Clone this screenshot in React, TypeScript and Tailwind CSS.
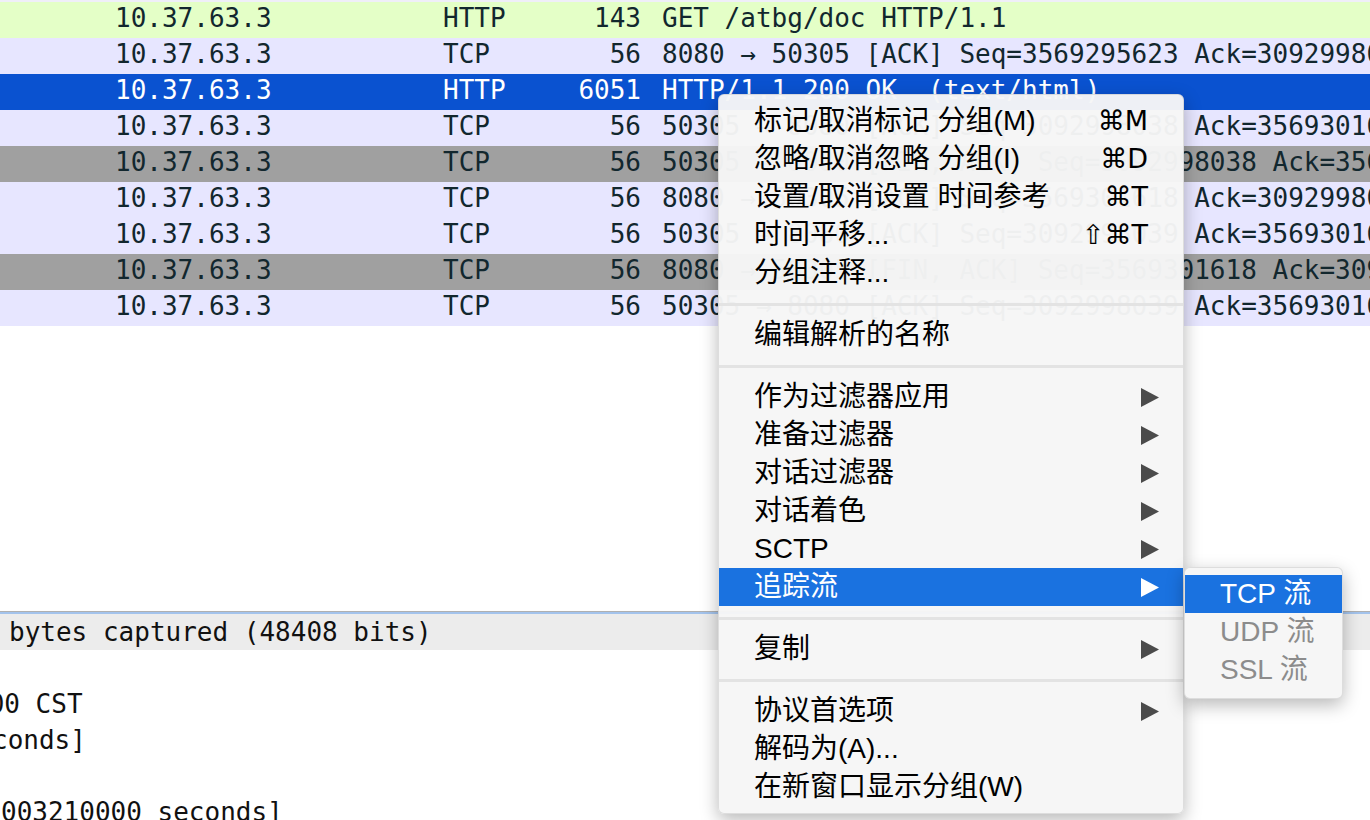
import React from 'react';

type Row = { proto: string; len: string; info: string; tone: 'green' | 'lav' | 'sel' | 'gray' };

const ROWS: Row[] = [
  { proto: 'HTTP', len: '143', info: 'GET /atbg/doc HTTP/1.1', tone: 'green' },
  { proto: 'TCP', len: '56', info: '8080 → 50305 [ACK] Seq=3569295623 Ack=3092998038 Win=4096', tone: 'lav' },
  { proto: 'HTTP', len: '6051', info: 'HTTP/1.1 200 OK  (text/html)', tone: 'sel' },
  { proto: 'TCP', len: '56', info: '50305 → 8080 [ACK] Seq=3092998038 Ack=3569301618 Win=4096', tone: 'lav' },
  { proto: 'TCP', len: '56', info: '50305 → 8080 [FIN, ACK] Seq=3092998038 Ack=3569301618', tone: 'gray' },
  { proto: 'TCP', len: '56', info: '8080 → 50305 [ACK] Seq=3569301618 Ack=3092998039 Win=4096', tone: 'lav' },
  { proto: 'TCP', len: '56', info: '50305 → 8080 [ACK] Seq=3092998039 Ack=3569301618 Win=4096', tone: 'lav' },
  { proto: 'TCP', len: '56', info: '8080 → 50305 [FIN, ACK] Seq=3569301618 Ack=3092998039', tone: 'gray' },
  { proto: 'TCP', len: '56', info: '50305 → 8080 [ACK] Seq=3092998039 Ack=3569301619 Win=4096', tone: 'lav' },
];

const TONE: Record<Row['tone'], string> = {
  green: 'bg-[#e4ffc7] text-[#12272e]',
  lav: 'bg-[#e7e6ff] text-[#12272e]',
  sel: 'bg-[#0a52d0] text-white',
  gray: 'bg-[#a0a0a0] text-[#12272e]',
};

type Item =
  | { kind: 'item'; label: string; key?: string; sub?: boolean; active?: boolean }
  | { kind: 'sep' };

const MENU: Item[] = [
  { kind: 'item', label: '标记/取消标记 分组(M)', key: '⌘M' },
  { kind: 'item', label: '忽略/取消忽略 分组(I)', key: '⌘D' },
  { kind: 'item', label: '设置/取消设置 时间参考', key: '⌘T' },
  { kind: 'item', label: '时间平移...', key: '⇧⌘T' },
  { kind: 'item', label: '分组注释...' },
  { kind: 'sep' },
  { kind: 'item', label: '编辑解析的名称' },
  { kind: 'sep' },
  { kind: 'item', label: '作为过滤器应用', sub: true },
  { kind: 'item', label: '准备过滤器', sub: true },
  { kind: 'item', label: '对话过滤器', sub: true },
  { kind: 'item', label: '对话着色', sub: true },
  { kind: 'item', label: 'SCTP', sub: true },
  { kind: 'item', label: '追踪流', sub: true, active: true },
  { kind: 'sep' },
  { kind: 'item', label: '复制', sub: true },
  { kind: 'sep' },
  { kind: 'item', label: '协议首选项', sub: true },
  { kind: 'item', label: '解码为(A)...' },
  { kind: 'item', label: '在新窗口显示分组(W)' },
];

const mono = "font-['DejaVu_Sans_Mono',monospace] text-[26px] whitespace-pre";
const ui = "font-['Liberation_Sans','Noto_Sans_CJK_SC',sans-serif] text-[28px] leading-[38px]";

function Arrow({ white }: { white?: boolean }) {
  return (
    <svg width="18" height="19" viewBox="0 0 18 19" className="shrink-0">
      <path d="M0 0 L18 9.5 L0 19 Z" fill={white ? '#ffffff' : '#4b4b4b'} />
    </svg>
  );
}

export default function App() {
  return (
    <div className="relative w-[1370px] h-[820px] overflow-hidden bg-white">
      {/* packet list */}
      <div className="h-[2px] bg-[#efeff8]" />
      {ROWS.map((r, i) => (
        <div key={i} className={`flex h-[36px] leading-[32px] overflow-hidden ${mono} ${TONE[r.tone]}`}>
          <span className="w-[115px] shrink-0" />
          <span className="w-[328px] shrink-0">10.37.63.3</span>
          <span className="w-[120px] shrink-0">{r.proto}</span>
          <span className="w-[78px] shrink-0 text-right">{r.len}</span>
          <span className="pl-[21px] shrink-0">{r.info}</span>
        </div>
      ))}
      <div className="h-[285px]" />

      {/* details pane */}
      <div className="h-px bg-[#b0b0b0]" />
      <div className="h-[2px] bg-[#a3c3ec]" />
      <div className={`bg-[#ececec] text-[#111] pl-[9px] leading-[36px] ${mono}`}>bytes captured (48408 bits)</div>
      <div className="h-[36px]" />
      <div className={`text-[#111] ml-[-27px] leading-[36px] ${mono}`}>000 CST</div>
      <div className={`text-[#111] ml-[-8px] leading-[36px] ${mono}`}>conds]</div>
      <div className="h-[36px]" />
      <div className={`text-[#111] pl-[1px] leading-[36px] ${mono}`}>003210000 seconds]</div>

      {/* context menu */}
      <div className="absolute left-[718px] top-[94px] w-[466px] py-[7px] rounded-[6px] bg-[#f6f6f6]/[0.97] border border-black/10 shadow-[0_6px_18px_rgba(0,0,0,0.28)]">
        {MENU.map((m, i) =>
          m.kind === 'sep' ? (
            <div key={i} className="h-[24px] flex items-center">
              <div className="h-[3px] w-full bg-[#e3e3e3]" />
            </div>
          ) : (
            <div
              key={i}
              className={`h-[38px] flex items-center pl-[35px] pr-[24px] ${ui} ${
                m.active ? 'bg-[#1a72e0] text-white' : 'text-black'
              }`}
            >
              <span className="whitespace-pre">{m.label}</span>
              {m.key && (
                <span className="ml-auto mr-[11px] font-['DejaVu_Sans',sans-serif] text-[27px]">{m.key}</span>
              )}
              {m.sub && (
                <span className="ml-auto">
                  <Arrow white={m.active} />
                </span>
              )}
            </div>
          ),
        )}
      </div>

      {/* submenu */}
      <div className="absolute left-[1184px] top-[567px] w-[159px] pt-[7px] pb-[9px] rounded-[6px] bg-[#f6f6f6] border border-black/10 shadow-[0_6px_18px_rgba(0,0,0,0.28)]">
        <div className={`h-[38px] flex items-center pl-[35px] bg-[#1a72e0] text-white ${ui}`}>TCP 流</div>
        <div className={`h-[38px] flex items-center pl-[35px] text-[#8c8c8c] ${ui}`}>UDP 流</div>
        <div className={`h-[38px] flex items-center pl-[35px] text-[#8c8c8c] ${ui}`}>SSL 流</div>
      </div>
    </div>
  );
}
